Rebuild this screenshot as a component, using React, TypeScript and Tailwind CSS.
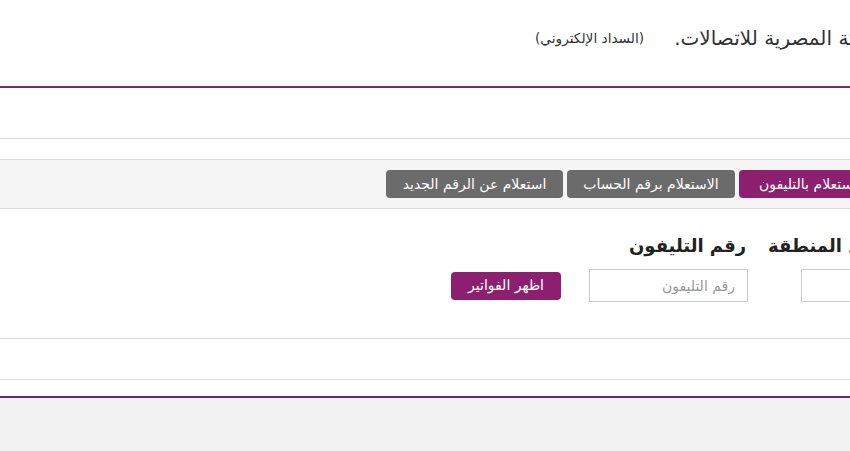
import React from "react";

export default function App() {
  return (
    <div className="w-[850px] h-[451px] overflow-hidden bg-[#f2f2f2] font-['DejaVu_Sans',sans-serif]">
      <div dir="rtl" className="w-[1000px] bg-white">
        {/* header */}
        <div className="h-[86px] flex items-center justify-end pl-[535px] gap-[30px] pb-[10px]">
          <span className="text-[20px] text-[#333] whitespace-nowrap">الشركة المصرية للاتصالات.</span>
          <span className="text-[13.7px] text-[#333] whitespace-nowrap">(السداد الإلكتروني)</span>
        </div>
        <div className="h-[2px] bg-[#7b2d60]" />
        <div className="h-[50px] border-b border-[#dddddd] box-content" />
        <div className="h-[20px]" />
        {/* tabs */}
        <div className="h-[50px] border-y border-[#dddddd] bg-[#f5f5f5] flex items-start justify-end pl-[386px] gap-[4px] pt-[10px]">
          <button className="h-[28px] w-[138px] rounded-[4px] bg-[#8c1f6f] text-white text-[14px] whitespace-nowrap">استعلام بالتليفون</button>
          <button className="h-[28px] w-[168px] rounded-[4px] bg-[#6b6b6b] text-white text-[14px] whitespace-nowrap">الاستعلام برقم الحساب</button>
          <button className="h-[28px] w-[177px] rounded-[4px] bg-[#6b6b6b] text-white text-[14px] whitespace-nowrap">استعلام عن الرقم الجديد</button>
        </div>
        {/* form */}
        <div className="h-[129px] border-b border-[#dddddd] box-content flex flex-col">
          <div className="flex justify-end pl-[629px] gap-[22px] pt-[23px]">
            <span className="text-[18px] font-bold text-[#222] whitespace-nowrap">كود المنطقة</span>
            <span className="text-[18px] font-bold text-[#222] whitespace-nowrap">رقم التليفون</span>
          </div>
          <div className="flex items-center justify-end pl-[451px] mt-[10px]">
            <input className="h-[33px] w-[159px] border border-[#cccccc] bg-white px-3 text-[14px]" />
            <input
              placeholder="رقم التليفون"
              className="h-[33px] w-[159px] border border-[#cccccc] bg-white px-3 text-[14px] mr-[53px] placeholder:text-[#999]"
            />
            <button className="h-[28px] w-[110px] rounded-[4px] bg-[#8c1f6f] text-white text-[14px] mr-[28px] whitespace-nowrap">اظهر الفواتير</button>
          </div>
        </div>
        <div className="h-[40px] border-b border-[#dddddd] box-content" />
        <div className="h-[16px]" />
        <div className="h-[2px] bg-[#6a2a6a]" />
      </div>
    </div>
  );
}
